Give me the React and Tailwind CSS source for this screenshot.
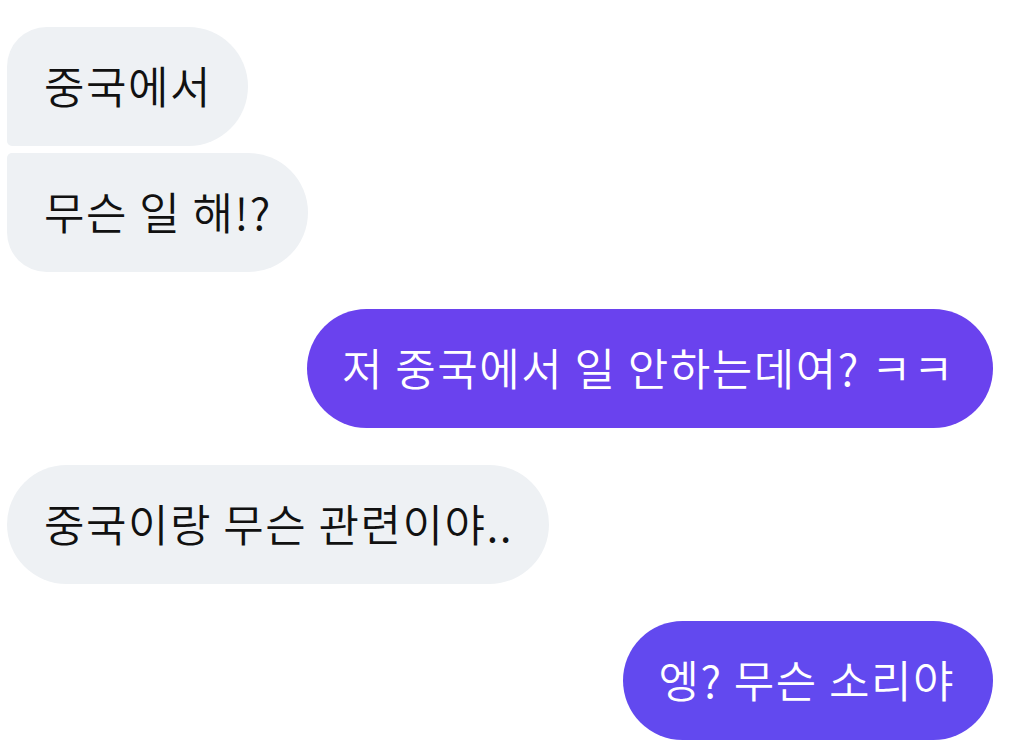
import React from 'react';

const messages = [
  { id: 1, side: 'left', text: '중국에서', shape: 'first' },
  { id: 2, side: 'left', text: '무슨 일 해!?', shape: 'last' },
  { id: 3, side: 'right', text: '저 중국에서 일 안하는데여? ㅋㅋ', color: 'bg-[#6a42ee]' },
  { id: 4, side: 'left', text: '중국이랑 무슨 관련이야..', shape: 'single' },
  { id: 5, side: 'right', text: '엥? 무슨 소리야', color: 'bg-[#6249ef]' },
];

function Bubble({ msg }) {
  if (msg.side === 'right') {
    return (
      <div className="flex justify-end pr-[25px]">
        <div className={`${msg.color} text-white h-[119px] flex items-center pl-[35px] pr-[38px] rounded-full`}>
          <span className="text-[44px] font-[350] leading-none tracking-[1.5px] -mt-[3px]">{msg.text}</span>
        </div>
      </div>
    );
  }
  const radius =
    msg.shape === 'first'
      ? 'rounded-tl-[40px] rounded-bl-[5px] rounded-r-[60px]'
      : msg.shape === 'last'
      ? 'rounded-tl-[5px] rounded-bl-[40px] rounded-r-[60px]'
      : 'rounded-[60px]';
  return (
    <div className="flex justify-start pl-[7px]">
      <div className={`bg-[#eef1f4] text-[#111111] h-[119px] flex items-center pl-[37px] pr-[36px] ${radius}`}>
        <span className="text-[44px] font-[350] leading-none tracking-[1.5px] -mt-[3px]">{msg.text}</span>
      </div>
    </div>
  );
}

export default function App() {
  return (
    <div
      className="w-[1018px] h-[747px] bg-white overflow-hidden pt-[27px]"
      style={{ fontFamily: '"Noto Sans CJK KR", "Noto Sans", sans-serif' }}
    >
      <div className="flex flex-col">
        <Bubble msg={messages[0]} />
        <div className="h-[7px]" />
        <Bubble msg={messages[1]} />
        <div className="h-[37px]" />
        <Bubble msg={messages[2]} />
        <div className="h-[37px]" />
        <Bubble msg={messages[3]} />
        <div className="h-[37px]" />
        <Bubble msg={messages[4]} />
      </div>
    </div>
  );
}
